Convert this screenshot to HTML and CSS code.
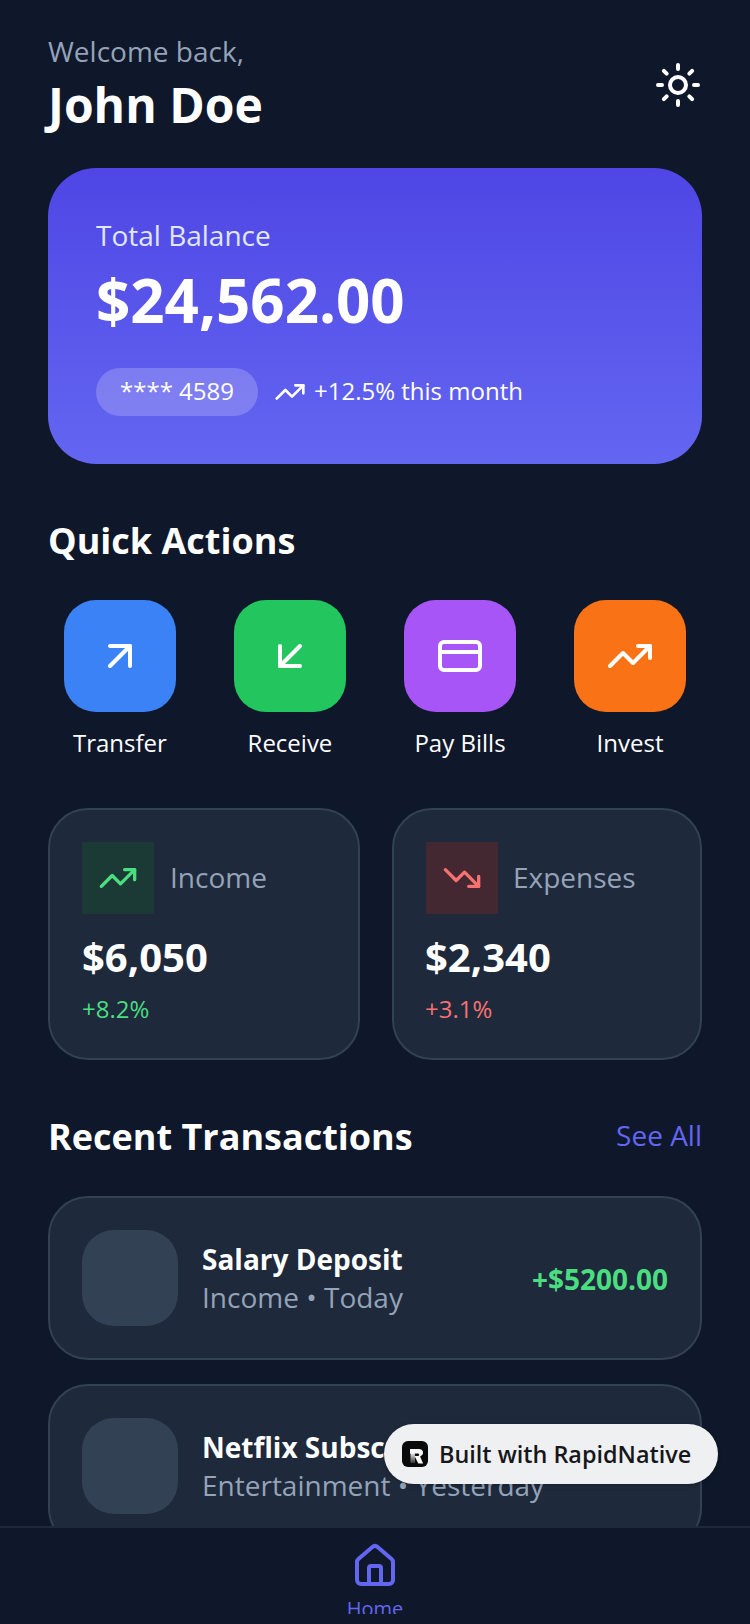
FILE: index.html
```html
<!DOCTYPE html>
<html lang="en">
<head>
<meta charset="UTF-8">
<meta name="viewport" content="width=device-width, initial-scale=1.0">
<link rel="stylesheet" href="styles.css">
<title>Wallet Dashboard</title>
</head>
<body>
<div class="app">
  <main class="content">
    <header class="header">
      <div>
        <div class="welcome">Welcome back,</div>
        <div class="user-name">John Doe</div>
      </div>
      <svg class="icon icon-48 icon-white" viewBox="0 0 24 24"><circle cx="12" cy="12" r="4"/><path d="M12 2v2M12 20v2M4.93 4.93l1.41 1.41M17.66 17.66l1.41 1.41M2 12h2M20 12h2M6.34 17.66l-1.41 1.41M19.07 4.93l-1.41 1.41"/></svg>
    </header>

    <section class="balance-card">
      <div class="balance-label">Total Balance</div>
      <div class="balance-amount">$24,562.00</div>
      <div class="balance-meta">
        <span class="card-pill">**** 4589</span>
        <svg class="icon icon-32 icon-white" viewBox="0 0 24 24"><path d="M22 7l-8.5 8.5-5-5L2 17"/><path d="M16 7h6v6"/></svg>
        <span class="trend-text">+12.5% this month</span>
      </div>
    </section>

    <h2 class="section-title quick-title">Quick Actions</h2>
    <div class="actions">
      <div class="action">
        <div class="action-btn bg-blue">
          <svg class="icon icon-48 icon-white" viewBox="0 0 24 24"><path d="M7 7h10v10"/><path d="M7 17L17 7"/></svg>
        </div>
        <div class="action-label">Transfer</div>
      </div>
      <div class="action">
        <div class="action-btn bg-green">
          <svg class="icon icon-48 icon-white" viewBox="0 0 24 24"><path d="M17 7L7 17"/><path d="M17 17H7V7"/></svg>
        </div>
        <div class="action-label">Receive</div>
      </div>
      <div class="action">
        <div class="action-btn bg-purple">
          <svg class="icon icon-48 icon-white" viewBox="0 0 24 24"><rect x="2" y="5" width="20" height="14" rx="2"/><path d="M2 10h20"/></svg>
        </div>
        <div class="action-label">Pay Bills</div>
      </div>
      <div class="action">
        <div class="action-btn bg-orange">
          <svg class="icon icon-48 icon-white" viewBox="0 0 24 24"><path d="M22 7l-8.5 8.5-5-5L2 17"/><path d="M16 7h6v6"/></svg>
        </div>
        <div class="action-label">Invest</div>
      </div>
    </div>

    <div class="stats">
      <div class="stat-card">
        <div class="stat-head">
          <div class="stat-icon stat-icon-up">
            <svg class="icon icon-40 icon-green" viewBox="0 0 24 24"><path d="M22 7l-8.5 8.5-5-5L2 17"/><path d="M16 7h6v6"/></svg>
          </div>
          <span class="stat-label">Income</span>
        </div>
        <div class="stat-amount">$6,050</div>
        <div class="stat-change text-green">+8.2%</div>
      </div>
      <div class="stat-card stat-card-right">
        <div class="stat-head">
          <div class="stat-icon stat-icon-down">
            <svg class="icon icon-40 icon-red" viewBox="0 0 24 24"><path d="M22 17l-8.5-8.5-5 5L2 7"/><path d="M16 17h6v-6"/></svg>
          </div>
          <span class="stat-label">Expenses</span>
        </div>
        <div class="stat-amount">$2,340</div>
        <div class="stat-change text-red">+3.1%</div>
      </div>
    </div>

    <div class="recent-head">
      <h2 class="section-title">Recent Transactions</h2>
      <span class="see-all">See All</span>
    </div>
    <div class="tx-list">
      <div class="tx-row">
        <div class="tx-thumb"></div>
        <div class="tx-info">
          <div class="tx-title">Salary Deposit</div>
          <div class="tx-sub">Income • Today</div>
        </div>
        <div class="tx-amount">+$5200.00</div>
      </div>
      <div class="tx-row">
        <div class="tx-thumb"></div>
        <div class="tx-info">
          <div class="tx-title">Netflix Subscription</div>
          <div class="tx-sub">Entertainment • Yesterday</div>
        </div>
        <div class="tx-amount tx-amount-out">-$15.99</div>
      </div>
    </div>
  </main>

  <nav class="tabbar">
    <div class="tab">
      <svg class="icon icon-48 icon-indigo" viewBox="0 0 24 24"><path d="M15 21v-8a1 1 0 0 0-1-1h-4a1 1 0 0 0-1 1v8"/><path d="M3 10a2 2 0 0 1 .709-1.528l7-5.999a2 2 0 0 1 2.582 0l7 5.999A2 2 0 0 1 21 10v9a2 2 0 0 1-2 2H5a2 2 0 0 1-2-2z"/></svg>
      <div class="tab-label">Home</div>
    </div>
  </nav>

  <div class="built-badge">
    <svg class="badge-logo" viewBox="0 0 26 26">
      <defs>
        <linearGradient id="logoFade" x1="0" y1="0" x2="0" y2="1">
          <stop offset="0" stop-color="#fff"/>
          <stop offset="1" stop-color="#333"/>
        </linearGradient>
      </defs>
      <rect width="26" height="26" rx="6" fill="#0a0a0a"/>
      <rect x="8.5" y="11" width="4.5" height="11" fill="url(#logoFade)"/>
      <path d="M8 8h9.5a3.6 3.6 0 0 1 2 6.6l-1.4 1 3 7h-4.8l-3.8-7.6h3.4a1 1 0 0 0 0-2.6H8z" fill="#f7f7f7"/>
    </svg>
    <span class="badge-text">Built with RapidNative</span>
  </div>
</div>
</body>
</html>
```

FILE: styles.css
```css
* {
  box-sizing: border-box;
}
body {
  margin: 0;
  background-color: #0f172a;
  font-family: "Open Sans", "Noto Sans", sans-serif;
  color: #fff;
}
.app {
  position: relative;
  display: flex;
  flex-direction: column;
  width: 750px;
  height: 1624px;
  overflow: hidden;
}
.content {
  flex: 1;
  min-height: 0;
  overflow: hidden;
  padding: 32px 48px 0;
}
.icon {
  display: block;
  flex-shrink: 0;
  fill: none;
  stroke-width: 2;
  stroke-linecap: round;
  stroke-linejoin: round;
}
.icon-48 { width: 48px; height: 48px; }
.icon-40 { width: 40px; height: 40px; }
.icon-32 { width: 32px; height: 32px; }
.icon-white { stroke: #fff; }
.icon-green { stroke: #4ade80; }
.icon-red { stroke: #f87171; }
.icon-indigo { stroke: #6366f1; }

.header {
  display: flex;
  justify-content: space-between;
  align-items: center;
  margin-bottom: 31px;
}
.welcome {
  font-size: 28px;
  color: #94a3b8;
}
.user-name {
  padding-top: 2px;
  font-size: 48px;
  font-weight: 700;
}

.balance-card {
  padding: 48px;
  margin-bottom: 52px;
  border-radius: 48px;
  background: linear-gradient(180deg, #4f46e5, #6366f1);
}
.balance-label {
  font-size: 28px;
  color: #e0e7ff;
}
.balance-amount {
  margin: 5px 0 27px;
  font-size: 60px;
  font-weight: 700;
}
.balance-meta {
  display: flex;
  align-items: center;
  height: 48px;
}
.card-pill {
  height: 48px;
  padding: 6px 24px 0;
  margin-right: 16px;
  border-radius: 24px;
  background-color: rgba(255, 255, 255, 0.2);
  font-size: 24px;
}
.trend-text {
  margin: -4px 0 0 8px;
  font-size: 24px;
}

.section-title {
  margin: 0;
  font-size: 36px;
  font-weight: 700;
}
.quick-title {
  margin-bottom: 35px;
}
.actions {
  display: flex;
  justify-content: space-between;
  margin-bottom: 49px;
}
.action {
  display: flex;
  flex-direction: column;
  align-items: center;
  width: 22%;
}
.action-btn {
  display: flex;
  justify-content: center;
  align-items: center;
  width: 112px;
  height: 112px;
  margin-bottom: 14px;
  border-radius: 32px;
}
.bg-blue { background-color: #3b82f6; }
.bg-green { background-color: #22c55e; }
.bg-purple { background-color: #a855f7; }
.bg-orange { background-color: #f97316; }
.action-label {
  font-size: 24px;
}

.stats {
  display: grid;
  grid-template-columns: 312px 310px;
  gap: 32px;
  margin-bottom: 52px;
}
.stat-card {
  padding: 32px 32px 33px;
  border: 2px solid #334155;
  border-radius: 40px;
  background-color: #1e293b;
}
.stat-card-right {
  padding-left: 31px;
}
.stat-head {
  display: flex;
  align-items: center;
  gap: 16px;
  margin-bottom: 15px;
}
.stat-icon {
  display: flex;
  justify-content: center;
  align-items: center;
  width: 72px;
  height: 72px;
}
.stat-icon-up { background-color: #1b3a36; }
.stat-icon-down {
  margin: 0 -1px 0 1px;
  background-color: #432832;
}
.stat-label {
  padding-bottom: 2px;
  font-size: 28px;
  color: #94a3b8;
}
.stat-amount {
  margin-bottom: 8px;
  font-size: 40px;
  font-weight: 700;
}
.stat-change {
  font-size: 24px;
}
.text-green { color: #4ade80; }
.text-red { color: #f87171; }

.recent-head {
  display: flex;
  justify-content: space-between;
  align-items: center;
  margin-bottom: 35px;
}
.see-all {
  padding-bottom: 4px;
  font-size: 28px;
  color: #6366f1;
}
.tx-list {
  display: flex;
  flex-direction: column;
  gap: 24px;
}
.tx-row {
  display: flex;
  align-items: center;
  padding: 32px;
  border: 2px solid #334155;
  border-radius: 40px;
  background-color: #1e293b;
}
.tx-thumb {
  flex-shrink: 0;
  width: 96px;
  height: 96px;
  margin-right: 24px;
  border-radius: 32px;
  background-color: #334155;
}
.tx-info {
  flex: 1;
  padding-top: 1px;
}
.tx-title {
  margin-bottom: 1px;
  font-size: 28px;
  font-weight: 700;
  line-height: 36px;
}
.tx-sub {
  font-size: 28px;
  line-height: 38px;
  color: #94a3b8;
}
.tx-amount {
  padding-top: 2px;
  font-size: 28px;
  font-weight: 700;
  color: #4ade80;
}
.tx-amount-out {
  color: #fff;
}

.tabbar {
  flex-shrink: 0;
  height: 98px;
  padding-top: 14px;
  border-top: 2px solid #1e293b;
  background-color: #0f172a;
}
.tab {
  display: flex;
  flex-direction: column;
  align-items: center;
  height: 72px;
  overflow: hidden;
}
.tab-label {
  margin-top: 5px;
  font-size: 20px;
  color: #6366f1;
}

.built-badge {
  position: absolute;
  left: 384px;
  top: 1424px;
  display: flex;
  align-items: center;
  gap: 11px;
  width: 334px;
  height: 60px;
  padding-left: 18px;
  border-radius: 30px;
  background-color: #eff0f2;
  box-shadow: 0 1px 4px rgba(0, 0, 0, 0.25);
}
.badge-logo {
  width: 26px;
  height: 26px;
}
.badge-text {
  font-size: 23.4px;
  font-weight: 600;
  color: #16171a;
}
```
